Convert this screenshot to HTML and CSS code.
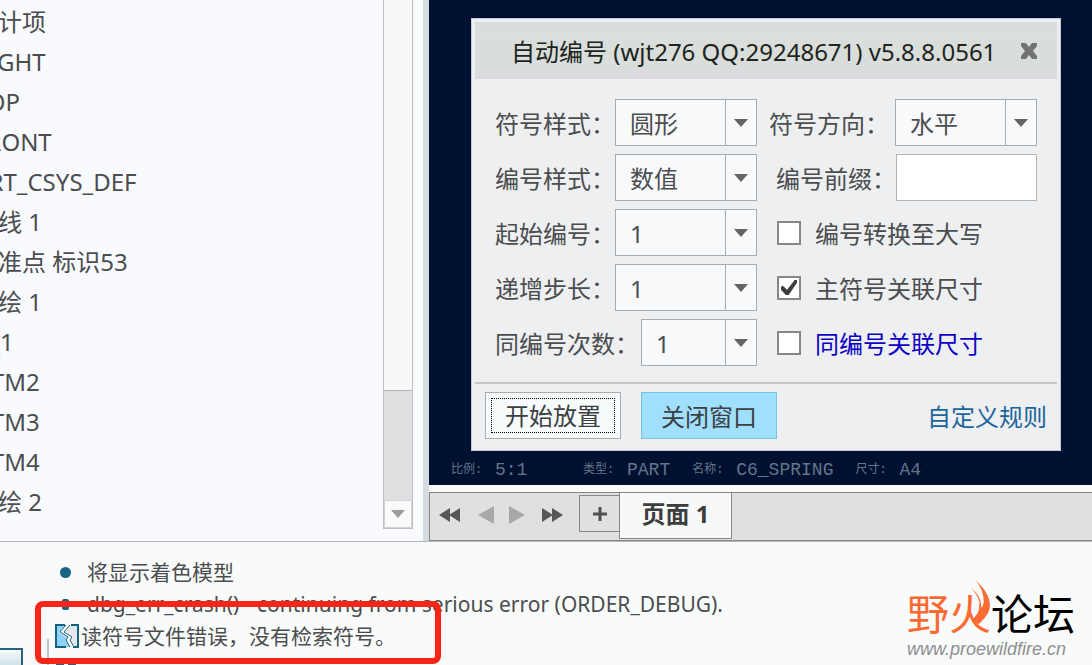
FILE: index.html
```
<!DOCTYPE html>
<html lang="zh-CN">
<head>
    <meta charset="UTF-8">
    <meta name="viewport" content="width=device-width, initial-scale=1.0">
    <title>自动编号</title>
    <link rel="stylesheet" href="styles.css">
</head>
<body>
    <div class="workspace">
        <aside class="sidebar">
            <ul class="tree">
                <li>设计项</li>
                <li>RIGHT</li>
                <li>TOP</li>
                <li>FRONT</li>
                <li>PRT_CSYS_DEF</li>
                <li>曲线 1</li>
                <li>基准点 标识53</li>
                <li>草绘 1</li>
                <li>A_1</li>
                <li>DTM2</li>
                <li>DTM3</li>
                <li>DTM4</li>
                <li>草绘 2</li>
            </ul>
            <div class="scrollbar">
                <div class="scroll-thumb"></div>
                <button class="scroll-down" type="button" aria-label="向下滚动">
                    <svg width="14" height="8" viewBox="0 0 14 8"><path d="M0 0h14L7 8z" fill="#999b9c"/></svg>
                </button>
            </div>
        </aside>

        <main class="viewer">
            <div class="canvas">
                <section class="dialog">
                    <header class="dialog-title">
                        <h1>自动编号 (wjt276 QQ:29248671) v5.8.8.0561</h1>
                        <button class="close-btn" type="button" aria-label="关闭">
                            <svg width="18" height="18" viewBox="0 0 18 18"><path d="M1 1h5l3 4 3-4h5v3l-4 5 4 5v3h-5l-3-4-3 4H1v-3l4-5-4-5z" fill="#717375"/></svg>
                        </button>
                    </header>
                    <form class="form">
                        <div class="field">
                            <label for="symbol-style">符号样式：</label>
                            <span class="combo"><select id="symbol-style"><option>圆形</option></select></span>
                        </div>
                        <div class="field spread">
                            <label for="symbol-dir">符号方向：</label>
                            <span class="combo"><select id="symbol-dir"><option>水平</option></select></span>
                        </div>
                        <div class="field">
                            <label for="number-style">编号样式：</label>
                            <span class="combo"><select id="number-style"><option>数值</option></select></span>
                        </div>
                        <div class="field end">
                            <label for="prefix">编号前缀：</label>
                            <input class="text-input" id="prefix" type="text">
                        </div>
                        <div class="field">
                            <label for="start">起始编号：</label>
                            <span class="combo"><select id="start"><option>1</option></select></span>
                        </div>
                        <div class="field check">
                            <input id="upper" type="checkbox">
                            <label for="upper">编号转换至大写</label>
                        </div>
                        <div class="field">
                            <label for="step">递增步长：</label>
                            <span class="combo"><select id="step"><option>1</option></select></span>
                        </div>
                        <div class="field check">
                            <input id="main-dim" type="checkbox" checked>
                            <label for="main-dim">主符号关联尺寸</label>
                        </div>
                        <div class="field long">
                            <label for="repeat">同编号次数：</label>
                            <span class="combo"><select id="repeat"><option>1</option></select></span>
                        </div>
                        <div class="field check">
                            <input id="same-dim" type="checkbox">
                            <label class="blue" for="same-dim">同编号关联尺寸</label>
                        </div>
                    </form>
                    <footer class="dialog-footer">
                        <button class="btn start-btn" type="button"><span>开始放置</span></button>
                        <button class="btn close-window" type="button">关闭窗口</button>
                        <a href="#">自定义规则</a>
                    </footer>
                </section>
                <dl class="drawing-info">
                    <div class="scale"><dt>比例:</dt><dd>5:1</dd></div>
                    <div><dt>类型:</dt><dd>PART</dd></div>
                    <div><dt>名称:</dt><dd>C6_SPRING</dd></div>
                    <div><dt>尺寸:</dt><dd>A4</dd></div>
                </dl>
            </div>
            <nav class="sheets">
                <button class="nav-btn wide" type="button" aria-label="第一页">
                    <svg width="22" height="14" viewBox="0 0 22 14"><path d="M0 7L11 0v14zM10 7L21 0v14z" fill="#555857"/></svg>
                </button>
                <button class="nav-btn" type="button" aria-label="上一页">
                    <svg width="16" height="18" viewBox="0 0 16 18"><path d="M0 9L16 0v18z" fill="#a6a9a8"/></svg>
                </button>
                <button class="nav-btn" type="button" aria-label="下一页">
                    <svg width="16" height="18" viewBox="0 0 16 18"><path d="M16 9L0 0v18z" fill="#a6a9a8"/></svg>
                </button>
                <button class="nav-btn wide" type="button" aria-label="最后一页">
                    <svg width="22" height="14" viewBox="0 0 22 14"><path d="M22 7L11 0v14zM12 7L1 0v14z" fill="#555857"/></svg>
                </button>
                <button class="add-btn" type="button" aria-label="新建页面">
                    <svg width="16" height="16" viewBox="0 0 16 16"><path d="M8 1v14M1 8h14" stroke="#4d504f" stroke-width="3"/></svg>
                </button>
                <a class="sheet-tab" href="#">页面 1</a>
            </nav>
        </main>
    </div>

    <section class="messages">
        <ul>
            <li><i class="dot"></i>将显示着色模型</li>
            <li><i class="dot small"></i>dbg_err_crash() - continuing from serious error (ORDER_DEBUG).</li>
            <li class="error">
                <svg width="24" height="24" viewBox="0 0 24 24">
                    <path d="M1 1h22v22H1z" fill="#e3e8ee"/>
                    <path d="M1 1h12L8 8l8 5-2 3 4 7H1z" fill="#8ed3f5"/>
                    <path d="M13 1L7 8l8 5-2 3 5 7" fill="none" stroke="#fff" stroke-width="4"/>
                    <path d="M11 1L5 8l8 5-2 3 4 7M15 1L9 8l8 5-2 3 4 7" fill="none" stroke="#17607f" stroke-width="1"/>
                    <path d="M10 1H1v22h10M16 1h7v22h-5" fill="none" stroke="#17607f" stroke-width="2"/>
                </svg>读符号文件错误，没有检索符号。
            </li>
            <li class="next">
                <svg width="22" height="18" viewBox="0 0 22 18"><path d="M9 2h4M2 17V6h7M13 6h7v11" fill="none" stroke="#3d5b70" stroke-width="2"/></svg>
            </li>
        </ul>
        <button class="corner-btn" type="button" aria-label="消息"></button>
        <div class="guide"></div>
        <div class="highlight"></div>
        <div class="logo">
            <div class="logo-name"><span>野火</span>论坛</div>
            <svg class="flame" width="24" height="46" viewBox="0 0 24 46"><path d="M7 0c10 8 19 22 13 33-3 5-6 8-9 11-5-1-7-3-6-5 5-5 7-9 6-16 2 2 3 4 3 7C18 21 15 8 7 0zM3 8c8 6 11 14 10 21-1-8-4-15-10-21z" fill="#fb6a32"/></svg>
            <div class="logo-url">www.proewildfire.cn</div>
        </div>
    </section>
</body>
</html>
```
FILE: styles.css
```
:root {
    --text-color: #4b4d4f;
    --panel-bg: #f9fafd;
    --dialog-bg: #eeeff1;
    --canvas-bg: #001030;
    --line: #a9acae;
    --blue: #a0dffd;
}

* {
    margin: 0;
    padding: 0;
    box-sizing: border-box;
    font-family: 'Noto Sans', 'Noto Sans CJK SC', sans-serif;
}

body {
    min-height: 100vh;
    display: grid;
    grid-template-rows: 1fr 124px;
    background-color: #f9fbfa;
    color: var(--text-color);
    font-size: 24px;
    overflow: hidden;
}

ul {
    list-style: none;
}

button {
    border: none;
    background: none;
    cursor: pointer;
}

svg {
    display: block;
}

.workspace {
    display: flex;
}

/* model tree */
.sidebar {
    width: 429px;
    flex: none;
    display: flex;
    background-color: var(--panel-bg);
    border-right: 6px solid #d5dde2;
    overflow: hidden;
}

.tree {
    flex: 1;
    margin-left: -26px;
    padding-top: 2px;
}

.tree li {
    height: 40px;
    line-height: 40px;
    white-space: nowrap;
}

.scrollbar {
    width: 30px;
    margin: 0 10px 12px 0;
    display: flex;
    flex-direction: column;
    justify-content: flex-end;
    background-color: #f8f8f8;
    border: 1px solid #bcbec0;
    border-top: none;
}

.scroll-thumb {
    height: 110px;
    background-color: #dedfe0;
    border-top: 1px solid #b4b6b7;
}

.scroll-down {
    height: 28px;
    display: grid;
    place-items: center;
    background-color: #fafafa;
    border: 1px solid #d0d2d3;
}

/* drawing area */
.viewer {
    flex: 1;
    display: flex;
    flex-direction: column;
}

.canvas {
    flex: 1;
    display: flex;
    flex-direction: column;
    justify-content: space-between;
    padding: 18px 31px 0 42px;
    background-color: var(--canvas-bg);
}

.dialog {
    padding: 3px;
    background-color: var(--dialog-bg);
    border: 1px solid #c3cad3;
}

.dialog-title {
    height: 57px;
    display: flex;
    align-items: center;
    justify-content: space-between;
    padding: 0 19px 0 36px;
    background: linear-gradient(#dadddc, #d9dedb 60%, #dadbdf);
    color: #202420;
}

.dialog-title h1 {
    font-size: 24px;
    font-weight: 400;
    white-space: nowrap;
}

.form {
    display: grid;
    grid-template-columns: 262px 1fr;
    grid-auto-rows: 47px;
    gap: 8px 12px;
    padding: 20px 20px 16px;
}

.field {
    display: flex;
    align-items: center;
    white-space: nowrap;
}

.field.spread {
    justify-content: space-between;
}

.field.end {
    justify-content: flex-end;
}

.field.check {
    gap: 14px;
    padding-left: 8px;
}

.field.long {
    gap: 2px;
}

.combo {
    position: relative;
    width: 142px;
    flex: 0 1 auto;
    height: 47px;
}

.combo::after {
    content: "";
    position: absolute;
    top: 20px;
    right: 9px;
    width: 14px;
    height: 8px;
    background-color: #626466;
    clip-path: polygon(0 0, 100% 0, 50% 100%);
    pointer-events: none;
}

select {
    appearance: none;
    width: 100%;
    height: 47px;
    padding: 2px 0 0 14px;
    border: 1px solid var(--line);
    border-radius: 0;
    background: linear-gradient(var(--line), var(--line)) right 30px top / 1px 100% no-repeat #f8f9fb;
    color: var(--text-color);
    font-size: 24px;
}

.text-input {
    width: 141px;
    height: 47px;
    padding: 0 14px;
    border: 1px solid #b3b6b9;
    background-color: #fff;
    font-size: 24px;
}

input[type="checkbox"] {
    appearance: none;
    width: 24px;
    height: 24px;
    display: grid;
    place-items: center;
    border: 2px solid #858789;
    background-color: #fff;
}

input[type="checkbox"]:checked::before {
    content: "";
    width: 16px;
    height: 15px;
    background-color: #3d3f41;
    clip-path: polygon(0 45%, 12% 38%, 38% 65%, 85% 0, 100% 0, 100% 18%, 48% 100%, 30% 100%, 0 65%);
}

.blue {
    color: #0c00c4;
}

.dialog-footer {
    display: flex;
    align-items: center;
    gap: 20px;
    padding: 8px 10px;
    border-top: 2px solid #c5c6c8;
}

.btn {
    width: 136px;
    height: 47px;
    color: #3b4043;
    font-size: 24px;
}

.start-btn {
    padding: 5px;
    border: 1px solid var(--line);
    background-color: #f7fbfb;
}

.start-btn span {
    display: block;
    height: 35px;
    line-height: 33px;
    border: 1px dotted #000;
}

.close-window {
    border: 1px solid #76c4e0;
    background-color: var(--blue);
}

.dialog-footer a {
    margin-left: auto;
    color: #1c659b;
    text-decoration: none;
}

.drawing-info {
    display: flex;
    gap: 22px;
    height: 30px;
    line-height: 30px;
    margin-left: -20px;
    color: #65758a;
    white-space: nowrap;
}

.drawing-info div {
    display: flex;
}

.drawing-info .scale {
    width: 110px;
}

.drawing-info dt {
    width: 44px;
    font-family: 'Liberation Mono', 'Noto Sans CJK SC', monospace;
    font-size: 12px;
}

.drawing-info dd {
    font-family: 'Liberation Mono', monospace;
    font-size: 18px;
}

/* sheet bar */
.sheets {
    height: 49px;
    margin-top: 7px;
    display: flex;
    background-color: #dfe0df;
    border: 1px solid #868886;
    border-right: none;
}

.nav-btn {
    width: 31px;
    height: 44px;
    display: grid;
    place-items: center;
    flex: none;
}

.nav-btn.wide {
    width: 40px;
}

.add-btn {
    width: 40px;
    height: 37px;
    display: grid;
    place-items: center;
    margin: 2px 0 0 7px;
    border: 1px solid #868886;
    border-right: none;
}

.sheet-tab {
    width: 113px;
    height: 46px;
    line-height: 42px;
    text-align: center;
    background-color: #f7f9f8;
    border: 1px solid #868886;
    border-top: none;
    color: #3b3e3c;
    font-size: 24px;
    font-weight: 700;
    text-decoration: none;
}

/* message log */
.messages {
    position: relative;
    height: 124px;
    padding: 14px 0 0 55px;
    border-top: 1px solid #b5b8b7;
    overflow: hidden;
    font-size: 21px;
}

.messages li {
    height: 32px;
    line-height: 32px;
    display: flex;
    align-items: center;
    white-space: nowrap;
}

.messages .error {
    gap: 2px;
}

.dot {
    width: 11px;
    height: 11px;
    margin: 0 16px 0 5px;
    border-radius: 50%;
    background-color: #196584;
}

.dot.small {
    width: 7px;
    margin: 0 18px 0 7px;
    border-radius: 2px;
}

.corner-btn {
    position: absolute;
    left: -2px;
    bottom: -12px;
    width: 25px;
    height: 29px;
    border: 2px solid #28637e;
    background: linear-gradient(#f8fafb, #b9d3df);
}

.guide {
    position: absolute;
    left: 47px;
    bottom: 0;
    height: 26px;
    border-left: 2px solid #c0c3c5;
}

.highlight {
    position: absolute;
    left: 35px;
    top: 59px;
    width: 406px;
    height: 63px;
    border: 6px solid #f72517;
    border-radius: 8px;
}

.logo {
    position: absolute;
    right: 15px;
    bottom: 6px;
    width: 170px;
}

.logo-name {
    color: #000;
    font-size: 42px;
    font-style: oblique 6deg;
    line-height: 50px;
}

.logo-name span {
    color: #fb6a32;
}

.flame {
    position: absolute;
    left: 61px;
    top: -9px;
}

.logo-url {
    color: #8c8f8e;
    font-family: 'Liberation Sans', sans-serif;
    font-size: 18px;
    font-style: italic;
    line-height: 20px;
}
```
